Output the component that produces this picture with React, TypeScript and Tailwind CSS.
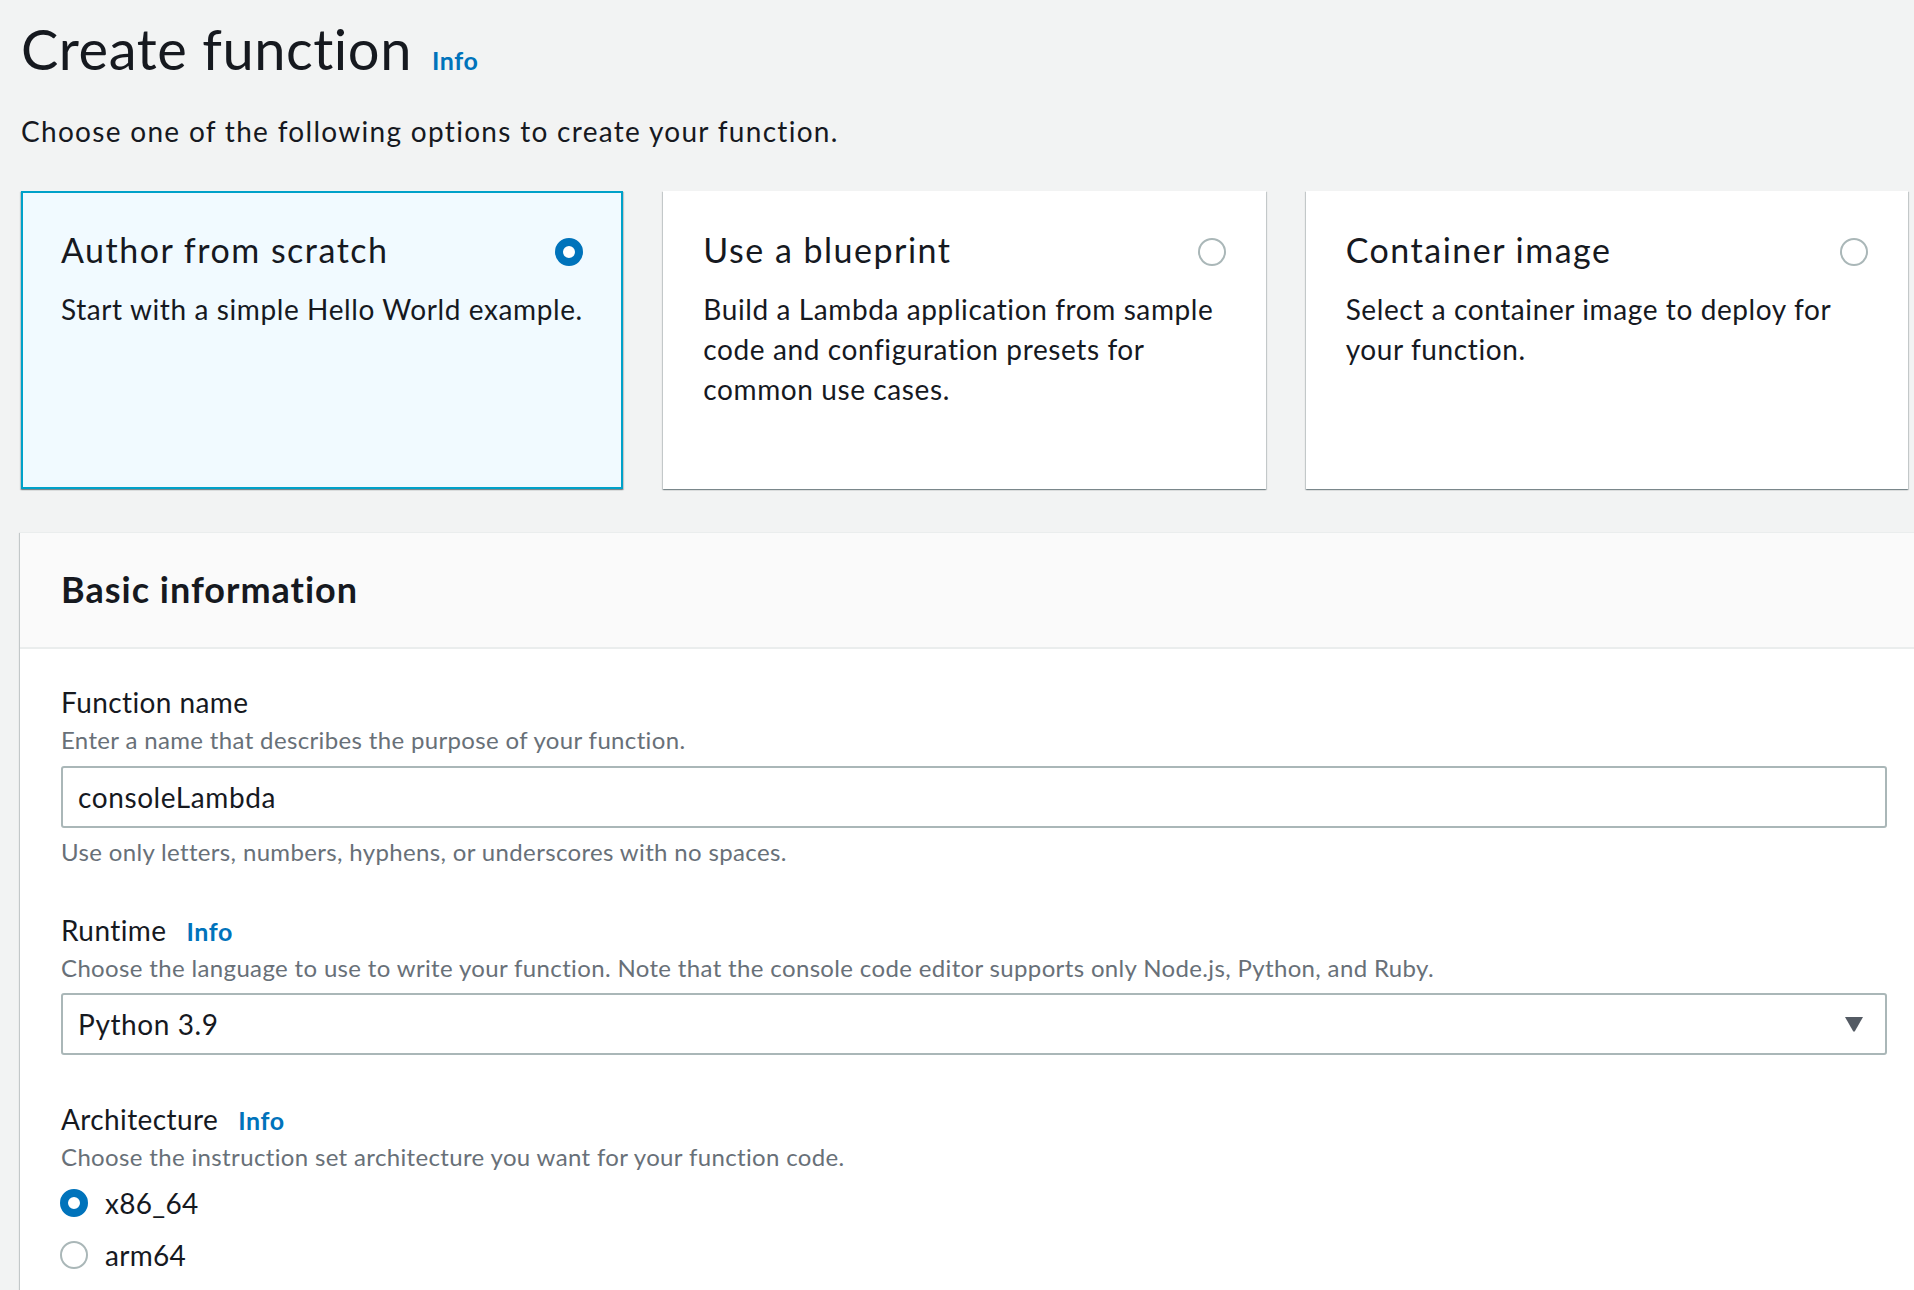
import React from "react";

const font = { fontFamily: "Lato, 'Liberation Sans', sans-serif" };

function Radio({ checked }: { checked: boolean }) {
  return checked ? (
    <span className="block w-[28px] h-[28px] rounded-full border-[8px] border-[#0073bb] bg-white shrink-0" />
  ) : (
    <span className="block w-[28px] h-[28px] rounded-full border-2 border-[#aab7b8] bg-white shrink-0" />
  );
}

function Card({
  title,
  desc,
  selected,
}: {
  title: string;
  desc: string;
  selected?: boolean;
}) {
  return (
    <div
      className={
        selected
          ? "h-[298px] border-2 border-[#00a1c9] bg-[#f1faff] px-[38px] pt-[38px] shadow-[0_1px_1px_0_rgba(0,28,36,0.3),1px_1px_1px_0_rgba(0,28,36,0.15),-1px_1px_1px_0_rgba(0,28,36,0.15)]"
          : "h-[298px] bg-white px-[40px] pt-[40px] shadow-[0_1px_1px_0_rgba(0,28,36,0.3),1px_1px_1px_0_rgba(0,28,36,0.15),-1px_1px_1px_0_rgba(0,28,36,0.15)]"
      }
    >
      <div className="flex items-center justify-between">
        <div className="text-[34px] leading-[38px] tracking-[1.5px] text-[#16191f]">{title}</div>
        <div className="pt-[4px]">
          <Radio checked={!!selected} />
        </div>
      </div>
      <div className="mt-[20px] text-[28px] leading-[40px] tracking-[0.6px] text-[#16191f]">{desc}</div>
    </div>
  );
}

function Info({ ml }: { ml: string }) {
  return (
    <span className={`${ml} text-[25px] leading-[28px] tracking-[0.6px] font-bold text-[#0073bb]`}>Info</span>
  );
}

function Label({ text, info }: { text: string; info?: boolean }) {
  return (
    <div className="flex items-baseline h-[40px] text-[28px] leading-[40px] tracking-[0.4px] text-[#16191f]">
      <span>{text}</span>
      {info && <Info ml="ml-[20px]" />}
    </div>
  );
}

function Desc({ text }: { text: string }) {
  return <div className="text-[24px] leading-[36px] tracking-[0.35px] text-[#687078]">{text}</div>;
}

export default function App() {
  return (
    <div
      className="min-h-screen bg-[#f2f3f3] pl-[21px] pr-[6px] pt-[15px] overflow-hidden"
      style={font}
    >
      <div className="flex items-baseline h-[67px]">
        <h1 className="text-[56px] leading-[67px] tracking-[0.55px] text-[#16191f]">Create function</h1>
        <Info ml="ml-[20px]" />
      </div>
      <p className="mt-[29px] text-[28px] leading-[40px] tracking-[1.3px] text-[#16191f]">
        Choose one of the following options to create your function.
      </p>

      <div className="mt-[40px] grid grid-cols-3 gap-x-[40px]">
        <Card
          title="Author from scratch"
          desc="Start with a simple Hello World example."
          selected
        />
        <Card
          title="Use a blueprint"
          desc="Build a Lambda application from sample code and configuration presets for common use cases."
        />
        <Card
          title="Container image"
          desc="Select a container image to deploy for your function."
        />
      </div>

      <div className="mt-[43px] -ml-[1px] -mr-[6px] bg-white shadow-[0_1px_1px_0_rgba(0,28,36,0.3),-1px_1px_1px_0_rgba(0,28,36,0.15)] border-t border-[#eaeded]">
        <div className="h-[116px] bg-[#fafafa] border-b-2 border-[#eaeded] flex items-center pl-[41px]">
          <h2 className="text-[36px] font-bold tracking-[1px] text-[#16191f] leading-[1.2]">Basic information</h2>
        </div>
        <div className="pl-[41px] pr-[27px] pt-[33px] pb-[20px]">
          <Label text="Function name" />
          <Desc text="Enter a name that describes the purpose of your function." />
          <div className="mt-[8px] h-[62px] border-2 border-[#aab7b8] rounded-[3px] bg-white flex items-center pl-[15px] text-[28px] tracking-[0.6px] text-[#16191f]">
            consoleLambda
          </div>
          <div className="mt-[6px]">
            <Desc text="Use only letters, numbers, hyphens, or underscores with no spaces." />
          </div>

          <div className="mt-[40px]">
            <Label text="Runtime" info />
          </div>
          <Desc text="Choose the language to use to write your function. Note that the console code editor supports only Node.js, Python, and Ruby." />
          <div className="mt-[7px] h-[62px] border-2 border-[#aab7b8] rounded-[3px] bg-white flex items-center justify-between pl-[15px] pr-[21px] text-[28px] tracking-[0.6px] text-[#16191f]">
            <span>Python 3.9</span>
            <svg width="20" height="16" viewBox="0 0 20 16">
              <path d="M1 1 H19 L11 15 Q10 16.5 9 15 Z" fill="#545b64" />
            </svg>
          </div>

          <div className="mt-[44px]">
            <Label text="Architecture" info />
          </div>
          <Desc text="Choose the instruction set architecture you want for your function code." />
          <div className="mt-[2px]">
            <div className="h-[52px] flex items-center">
              <span className="ml-[-1px]">
                <Radio checked />
              </span>
              <span className="ml-[17px] text-[28px] tracking-[0.3px] text-[#16191f]">x86_64</span>
            </div>
            <div className="h-[52px] flex items-center">
              <span className="ml-[-1px]">
                <Radio checked={false} />
              </span>
              <span className="ml-[17px] text-[28px] tracking-[0.3px] text-[#16191f]">arm64</span>
            </div>
          </div>
        </div>
      </div>
    </div>
  );
}
